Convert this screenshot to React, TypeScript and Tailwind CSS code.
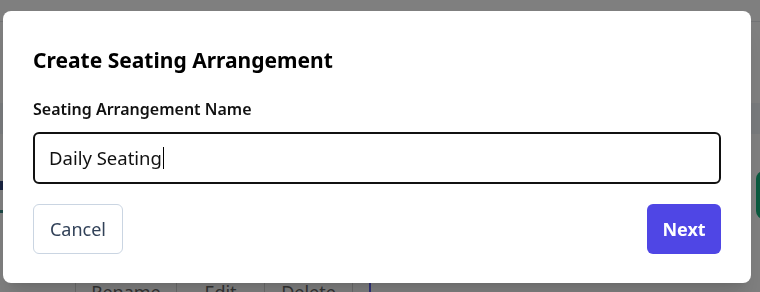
import React from "react"

function BackgroundPage() {
  return (
    <div className="flex h-[292px] flex-col overflow-hidden bg-white">
      <div className="h-[22px] shrink-0 border-b border-gray-200" />
      <div className="mt-[81px] h-[31px] shrink-0 bg-slate-100" />
      <div className="mt-[37px] flex h-[48px] shrink-0 items-start justify-between">
        <div className="mt-[10px] flex flex-col gap-[20px]">
          <div className="h-[9px] w-[40px] bg-[#33487f]" />
          <div className="h-[3px] w-[30px] bg-[#3a8f8a]" />
        </div>
        <div className="mr-[-30px] h-[48px] w-[34px] rounded-lg bg-[#15b47e]" />
      </div>
      <div className="mt-[53px] flex h-[40px] shrink-0 items-stretch pl-[75px] text-[18px] text-[#666]">
        <div className="flex w-[102px] items-center justify-center border-x border-[#d6d6d6]">Rename</div>
        <div className="flex w-[88px] items-center justify-center border-r border-[#d6d6d6]">Edit</div>
        <div className="flex w-[88px] items-center justify-center border-r border-[#d6d6d6]">Delete</div>
        <div className="ml-[16px] w-[2px] bg-[#6366f1]" />
      </div>
    </div>
  )
}

export default function App() {
  return (
    <div className="relative h-[292px] overflow-hidden font-['Noto_Sans',sans-serif]">
      <BackgroundPage />
      <div className="fixed inset-0 bg-black/50 pl-[3px] pt-[11px]">
        <div className="flex h-[272px] w-[748px] flex-col rounded-lg bg-white px-[30px] pb-[29px] pt-[35px] shadow-xl">
          <h2 className="text-[21px] font-bold leading-[28px] text-black">
            Create Seating Arrangement
          </h2>
          <label className="mt-[23px] text-[16px] font-semibold leading-[24px] text-[#111]">
            Seating Arrangement Name
          </label>
          <div className="mt-[11px] flex h-[52px] items-center rounded-md border-2 border-[#111] pl-[14px] text-[18.5px] text-[#111]">
            <span>Daily Seating</span>
            <span className="ml-px h-[22px] w-px bg-black" />
          </div>
          <div className="mt-[20px] flex items-center justify-between">
            <button className="flex h-[50px] w-[90px] items-center justify-center rounded-md border border-slate-300 bg-white text-[18px] text-slate-700">
              Cancel
            </button>
            <button className="flex h-[50px] w-[74px] items-center justify-center rounded-md bg-[#4f46e5] text-[18px] font-bold text-white">
              Next
            </button>
          </div>
        </div>
      </div>
    </div>
  )
}
